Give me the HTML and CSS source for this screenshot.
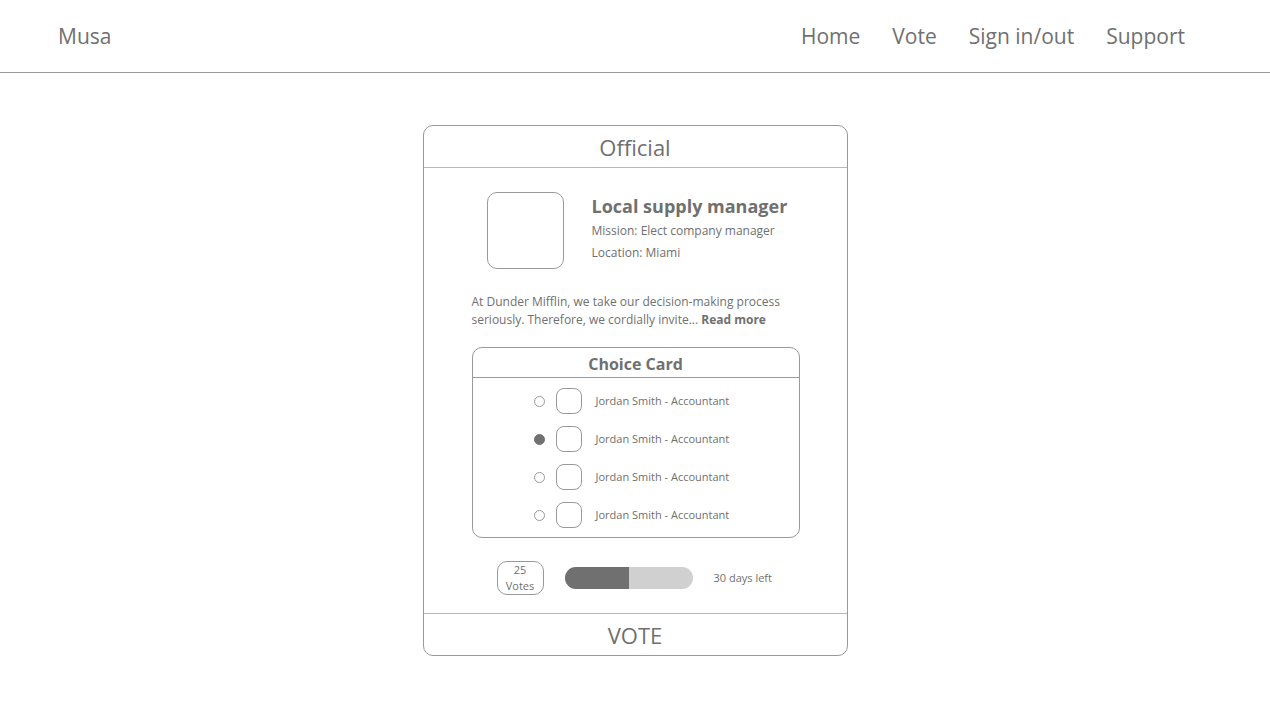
FILE: index.html
```html
<!DOCTYPE html>
<html lang="en">
<head>
<meta charset="utf-8">
<meta name="viewport" content="width=device-width, initial-scale=1">
<title>Musa</title>
<link rel="stylesheet" href="styles.css">
</head>
<body>
<header class="site-header">
  <a class="brand" href="#">Musa</a>
  <nav class="nav">
    <a href="#">Home</a>
    <a href="#">Vote</a>
    <a href="#">Sign in/out</a>
    <a href="#">Support</a>
  </nav>
</header>
<main class="page">
  <form class="card">
    <h1 class="card-title">Official</h1>
    <div class="card-body">
      <section class="summary">
        <div class="picture"></div>
        <div>
          <h2 class="headline">Local supply manager</h2>
          <p class="fact">Mission: Elect company manager</p>
          <p class="fact">Location: Miami</p>
        </div>
      </section>
      <p class="description">At Dunder Mifflin, we take our decision-making process<br>seriously. Therefore, we cordially invite... <a class="more" href="#">Read more</a></p>
      <section class="choices">
        <h2 class="choices-title">Choice Card</h2>
        <div class="choice-list">
          <label class="choice"><input type="radio" name="choice"><span class="avatar"></span><span>Jordan Smith - Accountant</span></label>
          <label class="choice"><input type="radio" name="choice" checked><span class="avatar"></span><span>Jordan Smith - Accountant</span></label>
          <label class="choice"><input type="radio" name="choice"><span class="avatar"></span><span>Jordan Smith - Accountant</span></label>
          <label class="choice"><input type="radio" name="choice"><span class="avatar"></span><span>Jordan Smith - Accountant</span></label>
        </div>
      </section>
      <section class="status">
        <div class="votes">25<br>Votes</div>
        <div class="progress"><div class="progress-fill" style="width: 50%"></div></div>
        <div class="days">30 days left</div>
      </section>
    </div>
    <button class="vote" type="button">VOTE</button>
  </form>
</main>
</body>
</html>
```

FILE: styles.css
```css
* {
  box-sizing: border-box;
}

body,
h1,
h2,
p {
  margin: 0;
}

body {
  background: #fff;
  color: #707070;
  font-family: "Open Sans", "Noto Sans", sans-serif;
  font-size: 12px;
}

a {
  color: inherit;
  text-decoration: none;
}

.site-header {
  display: flex;
  align-items: center;
  justify-content: space-between;
  padding: 20px 85px 20px 58px;
  border-bottom: 1px solid #999;
  font-size: 21px;
  line-height: 32px;
}

.nav {
  display: flex;
  gap: 32px;
}

.page {
  display: flex;
  justify-content: center;
  padding: 52px 16px;
}

.card {
  width: 100%;
  max-width: 425px;
  border: 1px solid #999;
  border-radius: 10px;
}

.card-title {
  padding: 6px 0 5px;
  border-bottom: 1px solid #b8b8b8;
  font-size: 22px;
  font-weight: 400;
  line-height: 30px;
  text-align: center;
}

.card-body {
  padding: 24px 47px 18px 48px;
}

.summary {
  display: flex;
  gap: 28px;
  padding-left: 15px;
}

.picture {
  flex: none;
  width: 77px;
  height: 77px;
  border: 1px solid #999;
  border-radius: 10px;
}

.headline {
  font-size: 18px;
  font-weight: 700;
  line-height: 28px;
  white-space: nowrap;
}

.fact {
  line-height: 22px;
  white-space: nowrap;
}

.description {
  margin-top: 24px;
  line-height: 18px;
  white-space: nowrap;
}

.more {
  font-weight: 700;
}

.choices {
  margin-top: 18px;
  border: 1px solid #999;
  border-radius: 10px;
}

.choices-title {
  padding: 4px 0 1px;
  border-bottom: 1px solid #999;
  font-size: 16px;
  font-weight: 700;
  line-height: 24px;
  text-align: center;
}

.choice-list {
  display: grid;
  gap: 12px;
  padding: 10px 0 9px 61px;
}

.choice {
  display: flex;
  align-items: center;
  font-size: 11px;
  line-height: 16px;
}

.choice input {
  appearance: none;
  width: 11px;
  height: 11px;
  margin: 0 11px 0 0;
  border: 1px solid #999;
  border-radius: 50%;
}

.choice input:checked {
  border-color: #707070;
  background: #707070;
}

.avatar {
  width: 26px;
  height: 26px;
  margin-right: 14px;
  border: 1px solid #999;
  border-radius: 8px;
}

.status {
  display: flex;
  align-items: center;
  gap: 21px;
  margin-top: 23px;
  padding-left: 25px;
  font-size: 11px;
  line-height: 16px;
}

.votes {
  width: 47px;
  border: 1px solid #999;
  border-radius: 10px;
  text-align: center;
}

.progress {
  width: 128px;
  height: 22px;
  overflow: hidden;
  border-radius: 11px;
  background: #d0d0d0;
}

.progress-fill {
  height: 100%;
  background: #707070;
}

.vote {
  display: block;
  width: 100%;
  padding: 6px 0 5px;
  border: 0;
  border-top: 1px solid #b8b8b8;
  background: none;
  color: inherit;
  font-family: inherit;
  font-size: 22px;
  line-height: 30px;
}
```
